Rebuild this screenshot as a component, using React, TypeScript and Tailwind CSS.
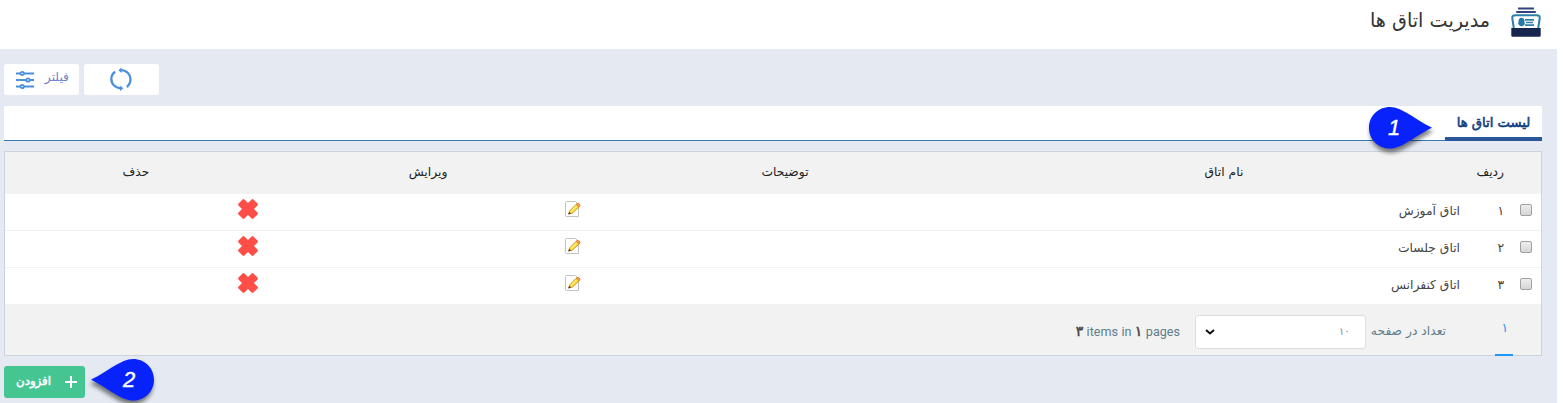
import React from "react";

const rooms = [
  { index: "۱", name: "اتاق آموزش" },
  { index: "۲", name: "اتاق جلسات" },
  { index: "۳", name: "اتاق کنفرانس" },
];

const columns = "grid grid-cols-[30px_44px_486px_392px_322px_262px]";

function RoomsLogo() {
  return (
    <svg className="h-[30px] w-[30px] shrink-0" viewBox="0 0 30 30" fill="none">
      <path d="M7 1.5H23M5.2 5H24.8" stroke="#34427c" strokeWidth="2" />
      <path d="M2.8 21L1.4 12C.9 9 2 8.2 4.5 8.2H25.5C28 8.2 29.1 9 28.6 12L27.2 21" stroke="#2f7fa9" strokeWidth="2" />
      <path d="M10.5 10.8C8.4 10.8 7.2 12.8 7.6 15C6.7 15.8 7 17.5 8.5 18.4L10.5 19.5L13 18.2C14 17.2 14 16 13.4 15C13.9 12.8 12.6 10.8 10.5 10.8Z" fill="#2578a8" />
      <path d="M14 12.8H23M15 15.5H22M14 18.2H23" stroke="#2f7fa9" strokeWidth="1.7" />
      <path d="M.3 21H29.7V28.5Q29.7 29.7 28.5 29.7H1.5Q.3 29.7.3 28.5Z" fill="#17244e" />
    </svg>
  );
}

function SlidersIcon() {
  return (
    <svg className="h-[20px] w-[20px]" viewBox="0 0 20 20" fill="none" stroke="#4a90dc" strokeWidth="1.8">
      <path d="M1 3.5H5.5M9 3.5H19M1 10H11M15 10H19M1 16.5H5.5M9 16.5H19" />
      <circle cx="7.2" cy="3.5" r="1.7" />
      <circle cx="13" cy="10" r="1.7" />
      <circle cx="7.2" cy="16.5" r="1.7" />
    </svg>
  );
}

function RefreshIcon() {
  return (
    <svg className="-mt-px -ml-px h-[24px] w-[24px]" viewBox="0 0 24 24" fill="none" stroke="#4a90dc" strokeWidth="2.3">
      <path d="M11.5 3.2C18 3.2 21.5 7.6 21.5 12C21.5 15.3 20 18.2 17.8 20" />
      <path d="M6.2 4.7C3.8 6.2 2.3 8.8 2.3 12C2.3 17 6.2 21.3 12.5 21.3" />
      <path d="M9.5 3.2L12.5.3V6.1ZM14.2 21.3L11.2 18.4V24.2Z" fill="#4a90dc" stroke="none" />
    </svg>
  );
}

function EditIcon() {
  return (
    <svg className="block h-[16px] w-[16px]" viewBox="0 0 16 16" fill="none">
      <path d="M1.5.5H10.5L13.5 3.5V15.5H1.5Q.5 15.5.5 14.5V1.5Q.5.5 1.5.5Z" fill="#fff" stroke="#c2c2c2" />
      <path d="M3.7 13L4.9 9.8L11.2 3.3Q12.7 2.1 14.2 3.3Q15.2 4.6 14 5.9L7.4 12Z" fill="#f8e63a" stroke="#e08a2c" />
      <path d="M11 3.5L12 2.6Q13.6 2 14.6 3.2Q15.4 4.6 13.9 6Z" fill="#f0a050" stroke="#d9661f" strokeWidth=".6" />
      <path d="M6.3 10L11.5 5" stroke="#fffa9c" />
      <path d="M3.2 13.5L4.1 10.9L6.2 12.6Z" fill="#5a2e12" />
    </svg>
  );
}

function DeleteIcon() {
  return (
    <svg className="block h-[20px] w-[20px]" viewBox="0 0 20 20" fill="#ff4d47">
      <path d="M4.6.5Q5.5-.3 6.4.5L10 4L13.6.5Q14.5-.3 15.4.5L19.5 4.6Q20.3 5.5 19.5 6.4L16 10L19.5 13.6Q20.3 14.5 19.5 15.4L15.4 19.5Q14.5 20.3 13.6 19.5L10 16L6.4 19.5Q5.5 20.3 4.6 19.5L.5 15.4Q-.3 14.5.5 13.6L4 10L.5 6.4Q-.3 5.5.5 4.6Z" />
    </svg>
  );
}

function Pin({ label, flip }: { label: string; flip?: boolean }) {
  return (
    <div className="relative h-[42px] w-[63px]">
      <svg
        className={"absolute inset-0 h-full w-full overflow-visible drop-shadow-[1px_4px_2px_rgba(0,0,0,0.5)] " + (flip ? "-scale-x-100" : "")}
        viewBox="0 0 63 42"
      >
        <path d="M21 0C9 0 0 9.2 0 20.7S9 41.5 21 41.5C33 41.5 46 29 63 20.7C46 12.5 33 0 21 0Z" fill="#0722fb" />
      </svg>
      <span
        className={
          "absolute top-[7px] w-[14px] text-center font-['Liberation_Sans',sans-serif] text-[22px] italic leading-[28px] text-white [-webkit-text-stroke:0.4px_white] " +
          (flip ? "left-[31px]" : "left-[18px]")
        }
      >
        {label}
      </span>
    </div>
  );
}

export default function App() {
  return (
    <div dir="rtl" className="h-[403px] overflow-hidden bg-white pr-[6px] font-['DejaVu_Sans',sans-serif] text-[12.3px] text-[#444]">
      <header className="flex h-[49px] items-start gap-[21px] pr-[16px] pt-[7px]">
        <RoomsLogo />
        <h1 className="text-[19.2px] leading-[28px] text-[#333]">مدیریت اتاق ها</h1>
      </header>

      <main className="h-[354px] bg-[#e5e9f2] pl-[4px] pr-[15px] pt-[15px]">
        <div className="flex h-[31px] justify-end gap-[5px]">
          <button className="flex w-[75px] items-center justify-center rounded-[3px] bg-white">
            <RefreshIcon />
          </button>
          <button className="flex w-[75px] items-center justify-between rounded-[3px] bg-white pl-[11px] pr-[10px] text-[#6d82cb]">
            <span className="-mt-1">فیلتر</span>
            <SlidersIcon />
          </button>
        </div>

        <nav className="relative mt-[11px] flex h-[35px] border-b border-[#337ab7] bg-white">
          <div className="-mb-px flex h-[35px] w-[97px] justify-center border-b-4 border-[#2b579a] text-[13.2px] leading-[33px] text-[#103f82] [-webkit-text-stroke:0.6px_#103f82]">
            لیست اتاق ها
          </div>
          <div className="absolute left-[1365px] top-[1px]">
            <Pin label="1" />
          </div>
        </nav>

        <section className="mt-[10px] h-[205px] border border-[#cbd4da] bg-[#f2f2f2]">
          <div className={columns + " h-[42px] text-center leading-[40px] text-[#222]"}>
            <span />
            <span className="pr-[7px] text-right">ردیف</span>
            <span>نام اتاق</span>
            <span>توضیحات</span>
            <span>ویرایش</span>
            <span>حذف</span>
          </div>
          {rooms.map((room) => (
            <div key={room.index} className={columns + " h-[37px] border-b border-[#f2f2f2] bg-white leading-[34px]"}>
              <span className="pr-[9px] pt-[10px]">
                <span className="block h-[12px] w-[12px] rounded-[2px] border border-[#a0a0a0] bg-linear-to-b from-[#eee] to-[#d6d6d6]" />
              </span>
              <span className="pr-[7px]">{room.index}</span>
              <span className="pr-[7px]">{room.name}</span>
              <span />
              <span className="pr-[8px] pt-[7px]"><EditIcon /></span>
              <span className="pr-[9px] pt-[5px]"><DeleteIcon /></span>
            </div>
          ))}
          <div className="flex h-[51px] items-start pr-[28px] text-[#607d8b]">
            <div className="h-[51px] w-[18px] border-b-2 border-[#2196f3] pr-[5px] leading-[47px] text-[#2196f3]">۱</div>
            <div className="mr-[49px] w-[76px] whitespace-nowrap leading-[52px]">تعداد در صفحه</div>
            <div className="mr-[4px] mt-[10px] flex h-[34px] w-[171px] items-center justify-between rounded-[3px] border border-[#ddd] bg-white pl-[9px] pr-[15px] text-[10.5px] text-[#8088a8]">
              <span>۱۰</span>
              <svg className="h-[6px] w-[10px]" viewBox="0 0 10 6" fill="none" stroke="#111" strokeWidth="2">
                <path d="M1 1L5 4.5L9 1" />
              </svg>
            </div>
            <div dir="ltr" className="mr-[15px] whitespace-nowrap font-[Roboto,'DejaVu_Sans',sans-serif] text-[12.6px] leading-[53px] [word-spacing:0.3px]">
              <span className="text-[14px] text-[#444] [-webkit-text-stroke:0.5px_#444]">۳</span> items in <span className="text-[14px] text-[#444] [-webkit-text-stroke:0.5px_#444]">۱</span> pages
            </div>
          </div>
        </section>

        <div className="mt-[10px] flex h-[32px] justify-end">
          <div className="mt-[-7px] ml-[6px]">
            <Pin label="2" flip />
          </div>
          <button className="flex w-[81px] items-center justify-between rounded-[3px] bg-[#45c592] pl-[12px] pr-[8px] text-[11.8px] text-white [-webkit-text-stroke:0.5px_white]">
            <svg className="h-[12px] w-[12px]" viewBox="0 0 12 12" stroke="white" strokeWidth="2">
              <path d="M6 0V12M0 6H12" />
            </svg>
            <span>افزودن</span>
          </button>
        </div>
      </main>
    </div>
  );
}
